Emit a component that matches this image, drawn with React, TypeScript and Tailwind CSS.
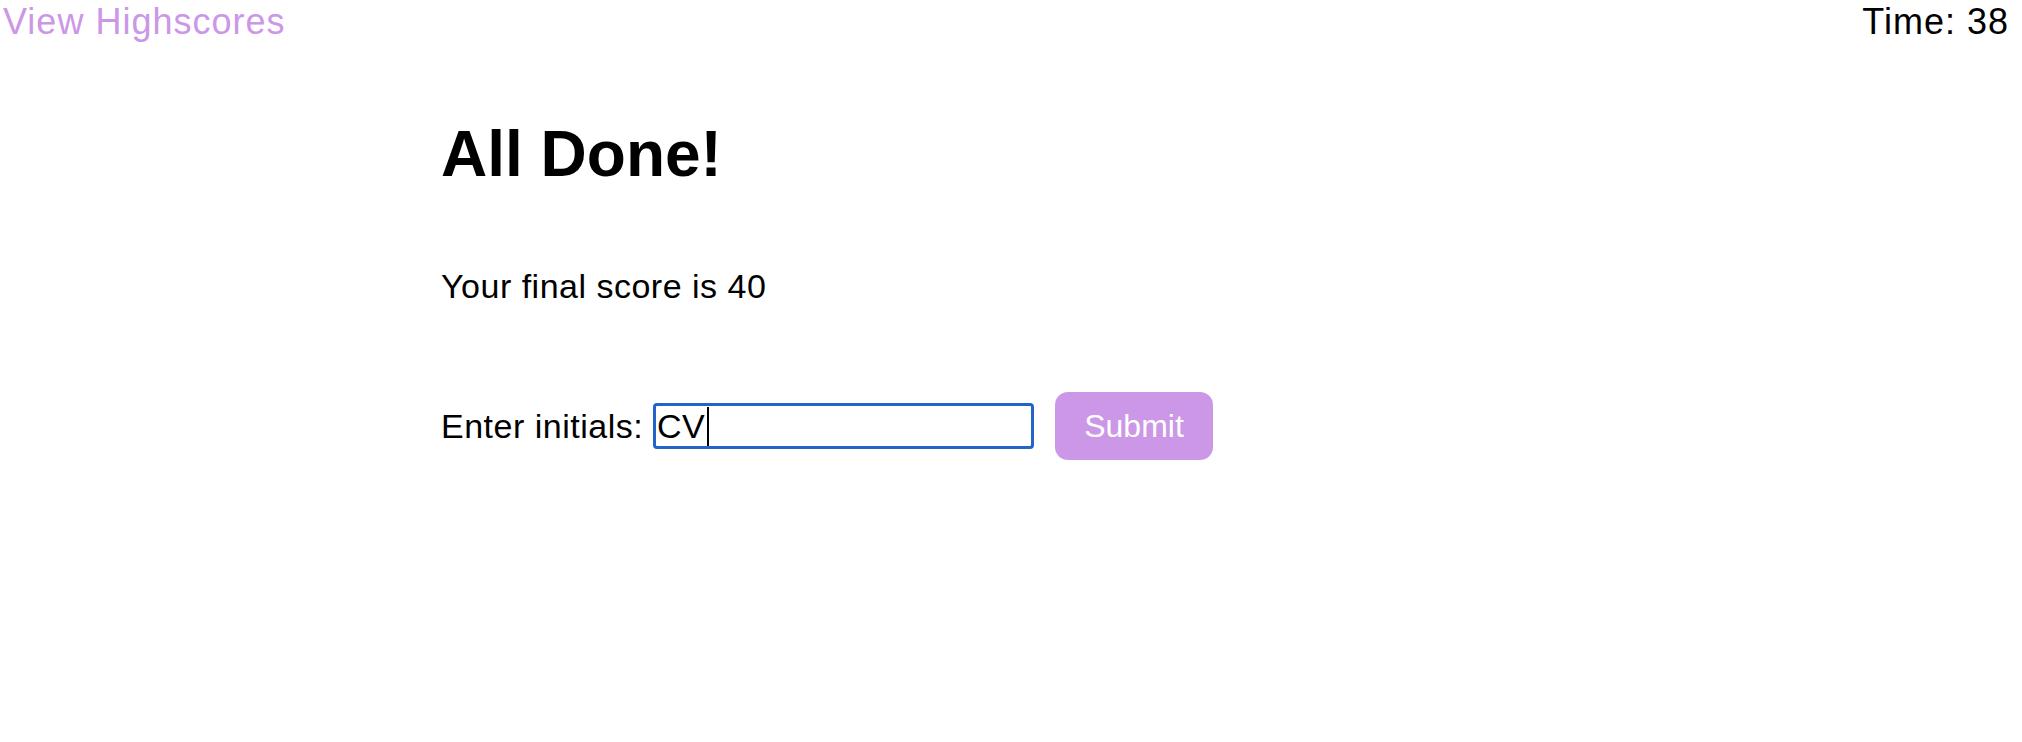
import React from "react";

export default function App() {
  return (
    <div
      className="min-h-[742px] w-full bg-white text-black"
      style={{ fontFamily: '"Liberation Sans", Arial, Helvetica, sans-serif' }}
    >
      <header className="flex items-start justify-between pt-[2px] pl-[3px] pr-[13px] h-[42px]">
        <a href="#" className="text-[36px] leading-[40px] tracking-[1px] text-[#cb97e6]">
          View Highscores
        </a>
        <div className="text-[36px] leading-[40px] tracking-[1px]">Time: 38</div>
      </header>

      <main className="mx-auto max-w-[1140px]">
        <h1 className="mt-[80px] text-[64px] leading-[64px] font-bold">All Done!</h1>
        <p className="mt-[83px] text-[34px] leading-[34px] tracking-[0.5px]">Your final score is 40</p>
        <div className="mt-[89px] flex items-center">
          <label className="w-[212px] shrink-0 text-[34px] leading-[34px] tracking-[0.5px]">
            Enter initials:
          </label>
          <div className="flex h-[46px] w-[381px] items-center rounded-[4px] border-[3px] border-[#2264c8] pl-[1px]">
            <span className="text-[34px] leading-[34px] tracking-[0.5px]">CV</span>
            <span className="ml-[2px] h-[39px] w-[2px] bg-black" />
          </div>
          <button className="ml-[21px] flex h-[68px] w-[158px] items-center justify-center rounded-[13px] bg-[#cb97e6] text-[32px] leading-[32px] text-white">
            Submit
          </button>
        </div>
      </main>
    </div>
  );
}
